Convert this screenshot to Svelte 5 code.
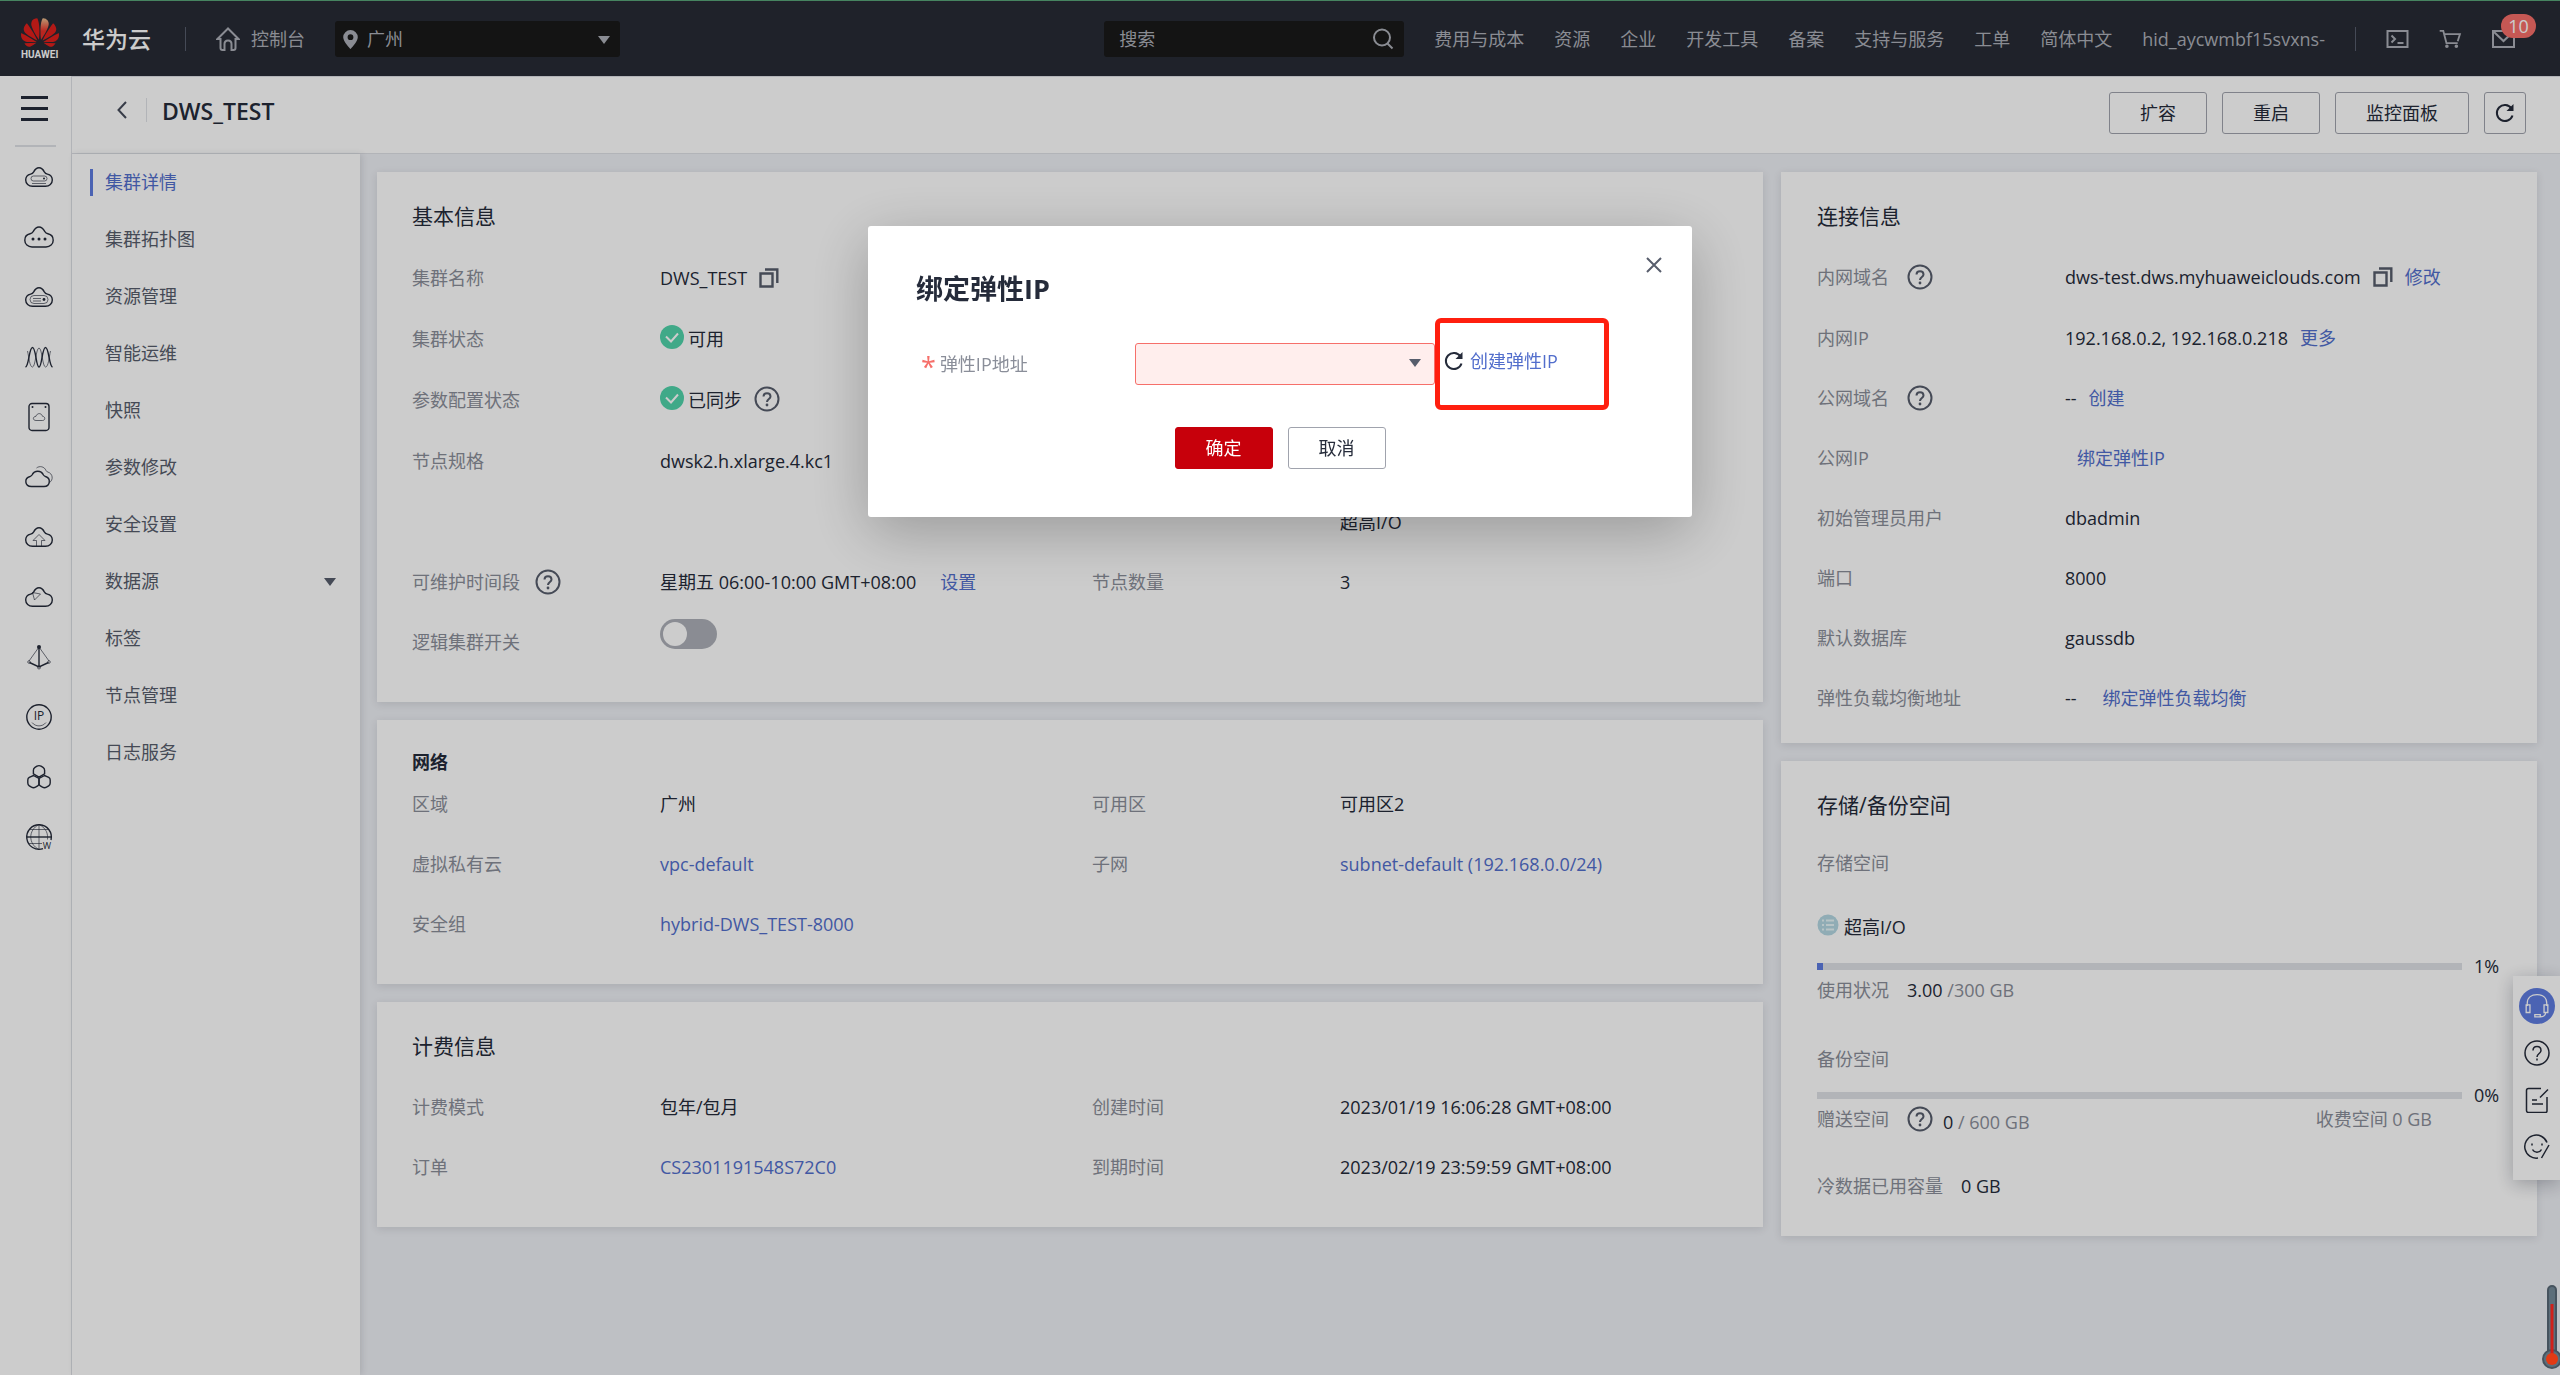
<script lang="ts">
	type RailItem = {
		label: string;
		paths: string[];
		thin?: string[];
		dots?: [number, number, number][];
		text?: { value: string; x: number; y: number; size: number };
	};

	const cloud =
		'M9.5 25.3C5.6 25.3 2.7 22.700 2.700 19.100c0-3 2-5.400 4.900-6 1.600-.3 2.300-.8 3.100-2.200C11.900 8.300 13.700 6.700 16 6.700s4.100 1.600 5.300 4.200c.8 1.400 1.500 1.900 3.100 2.200 2.900.6 4.900 3 4.900 6 0 3.600-2.900 6.200-6.800 6.200z';

	const rail: RailItem[] = [
		{ label: '弹性云服务器', paths: [cloud], thin: ['M10.500 15h11a2.500 2.500 0 0 1 0 5h-11a2.500 2.500 0 0 1 0-5z', 'M9 22.500h14'], dots: [[21, 17.5, 1]] },
		{
			label: '云耀云服务器',
			paths: ['M9 26C4.900 26 1.800 23.200 1.800 19.200c0-3.300 2.300-5.800 5.300-6.400 1.600-.3 2.400-1 3.200-2.400C11.600 7.900 13.500 6 16 6s4.400 1.900 5.700 4.400c.8 1.400 1.600 2.100 3.200 2.400 3 .6 5.300 3.100 5.300 6.400 0 4-3.100 6.800-7.200 6.800z'],
			dots: [[10, 18, 1.5], [16, 18, 1.5], [22, 18, 1.5]]
		},
		{ label: '裸金属服务器', paths: [cloud], thin: ['M11 14.500h10a4 4 0 0 1 0 8H11a4 4 0 0 1 0-8z', 'M10 17.500h8M10 20h8'], dots: [[21, 18.5, 1.4]] },
		{
			label: '弹性伸缩',
			paths: ['M2.500 26C6 25 6 6.500 9.500 6.500S13 26 16 26s3-19.500 6.500-19.500S26 25 29.500 26'],
			thin: ['M4.500 10C6 16 6.500 26 9.500 26S13 7 16 7s3.500 19 6.500 19S26 16 27.500 10']
		},
		{
			label: '云硬盘',
			paths: ['M9 2.500h14a3 3 0 0 1 3 3v21a3 3 0 0 1-3 3H9a3 3 0 0 1-3-3v-21a3 3 0 0 1 3-3z'],
			thin: ['M13 19.500c-3.500 0-3.500-4 0-4.200 1-3.600 5.500-3.600 6.500 0 3 .2 3 4.200 0 4.200z'],
			dots: [[9.5, 6, 1], [22.5, 6, 1]]
		},
		{
			label: '对象存储',
			paths: ['M8.500 25.500c-7 0-7.500-8.500-1.500-10 1-.3 1.500-.6 2-1.500 2.500-5 9-5 11.500 0 .5.900 1 1.200 2 1.500 5.500 1.500 5 10-1.500 10z'],
			thin: ['M13.500 7c3-2.500 8-1.500 9.500 2.500.4.900 1 1.300 2 1.600 5 1.500 5.500 8 1.500 10.400']
		},
		{ label: '云备份', paths: [cloud], thin: ['M13.500 25v-5.500H10l6-6 6 6h-3.500V25'] },
		{ label: '云专线', paths: [cloud], thin: ['M9.500 11.500l8 1.500-6 6z'] },
		{
			label: '虚拟私有云',
			paths: ['M16 6v20M6.500 21.500L16 26l9.500-4.500'],
			thin: ['M16 6L6 20M16 6l10 14', 'M7.300 21a1.300 1.300 0 1 1-2.600 0 1.300 1.300 0 0 1 2.600 0zM27.300 21a1.300 1.300 0 1 1-2.600 0 1.300 1.300 0 0 1 2.600 0zM17.500 26.500a1.500 1.500 0 1 1-3 0 1.500 1.500 0 0 1 3 0z'],
			dots: [[16, 6, 2]]
		},
		{
			label: '弹性公网IP',
			paths: ['M28.200 16a12.200 12.200 0 1 1-24.400 0 12.200 12.200 0 0 1 24.400 0z'],
			thin: ['M9 21.500c3.500 4.500 10.500 4.500 14 0'],
			text: { value: 'IP', x: 16, y: 19, size: 12 }
		},
		{
			label: '区块链',
			paths: [
				'M14 5.200q2-1.200 4 0l2 1.200q1.600 1 1.600 2.800v3.600L16 16.200l-5.600-3.400V9.200q0-1.800 1.600-2.800z',
				'M10.400 14.500L16 17.500v5q0 1.500-1.300 2.300l-2.200 1.400q-2 1.200-4 0l-2.200-1.400Q4.800 23.800 4.800 22v-3q0-1.700 1.500-2.600z',
				'M21.600 14.500L16 17.500v5q0 1.500 1.300 2.300l2.200 1.400q2 1.200 4 0l2.200-1.400q1.500-1 1.500-2.800v-3q0-1.700-1.500-2.600z'
			]
		},
		{
			label: '域名注册',
			paths: ['M20 27.700A12.300 12.300 0 1 1 28 19', 'M3.500 16h25'],
			thin: ['M16 3.500v25M16 3.500C5 9 5 23 16 28.500M16 3.500c8 4 9 10 8.500 15', 'M6 8.500h20M6 22.500h13'],
			text: { value: 'W', x: 24, y: 28, size: 9 }
		}
	];

	const topLinks = ['费用与成本', '资源', '企业', '开发工具', '备案', '支持与服务', '工单', '简体中文', 'hid_aycwmbf15svxns-'];

	const menu = ['集群详情', '集群拓扑图', '资源管理', '智能运维', '快照', '参数修改', '安全设置', '数据源', '标签', '节点管理', '日志服务'];

	let active = $state('集群详情');
	let keyword = $state('');
	let logicalCluster = $state(false);
	let dialogOpen = $state(true);
</script>

{#snippet helpIcon()}
	<svg class="help" viewBox="0 0 26 26" role="img" aria-label="帮助">
		<circle cx="13" cy="13" r="11.500" />
		<path d="M9.500 10.500c0-4.500 7-4.500 7 0 0 2.500-3.500 2.500-3.500 5.500" />
		<circle class="dot" cx="13" cy="19" r="1.400" />
	</svg>
{/snippet}

{#snippet copyIcon()}
	<svg class="copy" viewBox="0 0 20 20" role="img" aria-label="复制">
		<path d="M1.500 5.500h12v13h-12z" />
		<path d="M6 1.500h12.300V15" />
	</svg>
{/snippet}

{#snippet checkIcon()}
	<svg class="check" viewBox="0 0 24 24" aria-hidden="true">
		<circle cx="12" cy="12" r="12" />
		<path d="M6 11.500l5 5 7-8" />
	</svg>
{/snippet}

{#snippet refreshIcon()}
	<svg class="refresh" viewBox="0 0 20 20" aria-hidden="true">
		<path d="M17.500 12.500A8 8 0 1 1 16.500 5.500" />
		<path class="solid" d="M18.500 1v7h-7z" />
	</svg>
{/snippet}

{#snippet caret()}
	<svg class="caret" viewBox="0 0 12 8" aria-hidden="true"><path d="M0 0h12L6 8z" /></svg>
{/snippet}

<header class="topbar">
	<a class="logo" href="#home" aria-label="华为云首页">
		<svg viewBox="0 2.900 24 18.200" aria-hidden="true">
			<defs>
				<linearGradient id="petal" x1="0" y1="0" x2="0" y2="1">
					<stop offset="0" stop-color="#e8c090" />
					<stop offset="0.600" stop-color="#e83028" />
				</linearGradient>
			</defs>
			<path fill="#e0201c" d="M3.670 6.140S1.820 7.910 1.720 9.780v.35c.08 1.510 1.220 2.400 1.220 2.400 1.830 1.790 6.260 4.040 7.300 4.550 0 0 .06.03.1-.01l.02-.04v-.04C7.520 10.800 3.670 6.140 3.670 6.140zM9.650 18.600c-.02-.08-.1-.08-.1-.08l-7.380.26c.8 1.430 2.150 2.530 3.560 2.200.96-.25 3.160-1.780 3.880-2.300.06-.05.04-.09.04-.09zm.08-.78C6.490 15.630.21 12.280.21 12.280c-.15.46-.2.9-.21 1.300v.07c0 1.070.4 1.820.4 1.820.8 1.690 2.340 2.200 2.340 2.200.7.3 1.400.31 1.400.31.12.02 4.400 0 5.540 0 .05 0 .08-.05.08-.05v-.06c0-.03-.03-.05-.03-.05zM9.060 3.190a3.420 3.420 0 0 0-2.570 3.150v.41c.03.6.16 1.050.16 1.050.66 2.900 3.860 7.650 4.550 8.650.05.05.1.03.1.03a.1.1 0 0 0 .06-.1c1.060-10.600-1.110-13.420-1.110-13.420-.32.02-1.190.23-1.190.23z" />
			<path fill="url(#petal)" d="M17.360 5.460s-.49-1.800-2.440-2.280c0 0-.57-.14-1.170-.22 0 0-2.180 2.810-1.120 13.430.01.07.06.08.06.08.07.03.1-.03.1-.03.72-1.030 3.900-5.760 4.550-8.640 0 0 .36-1.400.02-2.340z" />
			<path fill="#e0201c" d="M14.440 18.530s-.07 0-.09.05c0 0-.01.07.03.1.7.51 2.850 2 3.880 2.300 0 0 .16.05.43.06h.14c.69-.02 1.900-.37 3-2.260zM22.270 10.120c.14-2.060-1.940-3.970-1.940-3.980 0 0-3.850 4.660-6.670 10.800 0 0-.03.08.02.13l.04.01h.06c1.060-.53 5.460-2.770 7.280-4.540 0 0 1.150-.93 1.210-2.420zM23.790 12.260s-6.280 3.370-9.520 5.550c0 0-.05.04-.03.11 0 0 .03.06.07.06 1.160 0 5.560 0 5.670-.02 0 0 .57-.02 1.270-.29 0 0 1.560-.5 2.370-2.270 0 0 .73-1.450.17-3.140z" />
		</svg>
		<span>HUAWEI</span>
	</a>
	<span class="brand">华为云</span>
	<span class="bar"></span>
	<a class="console" href="#console">
		<svg viewBox="0 0 24 24" aria-hidden="true">
			<path d="M12 1.500L1.500 12h3v9q0 2 2 2H8.500v-6q0-3.500 3.500-3.500t3.500 3.500v6h2q2 0 2-2v-9h3z" />
		</svg>
		控制台
	</a>
	<div class="region">
		<svg class="pin" viewBox="0 0 15 19" aria-hidden="true">
			<path d="M7.500 0A7.300 7.300 0 0 0 .2 7.300C.2 12 7.500 19 7.500 19s7.300-7 7.300-11.700A7.300 7.300 0 0 0 7.500 0zm0 4.300a2.900 2.900 0 1 1 0 5.800 2.900 2.900 0 0 1 0-5.800z" />
		</svg>
		<select aria-label="区域"><option>广州</option></select>
		{@render caret()}
	</div>

	<nav class="topnav" aria-label="顶部导航">
		<div class="search">
			<input type="text" placeholder="搜索" aria-label="搜索" bind:value={keyword} />
			<svg viewBox="0 0 22 22" aria-hidden="true"><circle cx="10" cy="9.500" r="8" /><path d="M15.500 15.500l5 5" /></svg>
		</div>
		{#each topLinks as link}
			<a href="#top">{link}</a>
		{/each}
		<span class="bar"></span>
		<a class="tool" href="#shell" aria-label="CloudShell">
			<svg viewBox="0 0 22 18"><path d="M1 1h20v16H1zM5 5.500l3.500 3.500L5 12.500M11 13h6" /></svg>
		</a>
		<a class="tool" href="#cart" aria-label="购物车">
			<svg viewBox="0 0 24 20"><path d="M0 1h4l3.500 13.500H20M5 4.500h17.500l-2.500 8" /><circle cx="8" cy="18" r="1" /><circle cx="18.500" cy="18" r="1" /></svg>
		</a>
		<a class="tool" href="#mail" aria-label="消息">
			<svg viewBox="0 0 23 18"><path d="M1 1h21v16H1zM2 2l9.500 9L21 2" /></svg>
			<span class="badge">10</span>
		</a>
	</nav>
</header>

<div class="page">
	<nav class="rail" aria-label="服务列表">
		<button class="burger" aria-label="展开菜单"><i></i><i></i><i></i></button>
		<hr />
		{#each rail as item}
			<a href="#service" aria-label={item.label}>
				<svg viewBox="0 0 32 32">
					{#each item.paths as d}<path {d} />{/each}
					{#each item.thin ?? [] as d}<path class="thin" {d} />{/each}
					{#each item.dots ?? [] as [cx, cy, r]}<circle {cx} {cy} {r} />{/each}
					{#if item.text}
						<text x={item.text.x} y={item.text.y} font-size={item.text.size}>{item.text.value}</text>
					{/if}
				</svg>
			</a>
		{/each}
	</nav>

	<div class="main">
		<div class="titlebar">
			<button class="back" aria-label="返回">
				<svg viewBox="0 0 10 18"><path d="M9 1L1.500 9 9 17" /></svg>
			</button>
			<h1>DWS_TEST</h1>
			<div class="actions">
				<button class="btn">扩容</button>
				<button class="btn">重启</button>
				<button class="btn">监控面板</button>
				<button class="btn square" aria-label="刷新">{@render refreshIcon()}</button>
			</div>
		</div>

		<div class="body">
			<ul class="menu">
				{#each menu as item}
					<li>
						<a class:active={item === active} href="#menu" onclick={() => (active = item)}>{item}</a>
						{#if item === '数据源'}{@render caret()}{/if}
					</li>
				{/each}
			</ul>

			<main>
				<div class="column">
					<section class="card">
						<h2>基本信息</h2>
						<dl class="four first">
							<dt>集群名称</dt>
							<dd>DWS_TEST {@render copyIcon()}</dd>
							<dt></dt>
							<dd></dd>
							<dt>集群状态</dt>
							<dd class="status">{@render checkIcon()}可用</dd>
							<dt></dt>
							<dd></dd>
							<dt>参数配置状态</dt>
							<dd class="status">{@render checkIcon()}已同步 {@render helpIcon()}</dd>
							<dt></dt>
							<dd></dd>
							<dt>节点规格</dt>
							<dd>dwsk2.h.xlarge.4.kc1</dd>
							<dt></dt>
							<dd class="disk">超高I/O</dd>
						</dl>
						<dl class="four">
							<dt>可维护时间段 {@render helpIcon()}</dt>
							<dd class="window">星期五 06:00-10:00 GMT+08:00 <a href="#window">设置</a></dd>
							<dt>节点数量</dt>
							<dd>3</dd>
							<dt><label for="logical">逻辑集群开关</label></dt>
							<dd class="toggle"><input id="logical" type="checkbox" role="switch" bind:checked={logicalCluster} /></dd>
						</dl>
					</section>

					<section class="card">
						<h3>网络</h3>
						<dl class="four">
							<dt>区域</dt>
							<dd>广州</dd>
							<dt>可用区</dt>
							<dd>可用区2</dd>
							<dt>虚拟私有云</dt>
							<dd><a href="#vpc">vpc-default</a></dd>
							<dt>子网</dt>
							<dd><a href="#subnet">subnet-default (192.168.0.0/24)</a></dd>
							<dt>安全组</dt>
							<dd><a href="#group">hybrid-DWS_TEST-8000</a></dd>
						</dl>
					</section>

					<section class="card">
						<h2>计费信息</h2>
						<dl class="four">
							<dt>计费模式</dt>
							<dd>包年/包月</dd>
							<dt>创建时间</dt>
							<dd>2023/01/19 16:06:28 GMT+08:00</dd>
							<dt>订单</dt>
							<dd><a href="#order">CS2301191548S72C0</a></dd>
							<dt>到期时间</dt>
							<dd>2023/02/19 23:59:59 GMT+08:00</dd>
						</dl>
					</section>
				</div>

				<div class="column">
					<section class="card connection">
						<h2>连接信息</h2>
						<dl class="two">
							<dt>内网域名 {@render helpIcon()}</dt>
							<dd>dws-test.dws.myhuaweiclouds.com {@render copyIcon()} <a href="#domain">修改</a></dd>
							<dt>内网IP</dt>
							<dd>192.168.0.2, 192.168.0.218 <a href="#more">更多</a></dd>
							<dt>公网域名 {@render helpIcon()}</dt>
							<dd>-- <a href="#create">创建</a></dd>
							<dt>公网IP</dt>
							<dd class="indent"><a href="#eip">绑定弹性IP</a></dd>
							<dt>初始管理员用户</dt>
							<dd>dbadmin</dd>
							<dt>端口</dt>
							<dd>8000</dd>
							<dt>默认数据库</dt>
							<dd>gaussdb</dd>
							<dt>弹性负载均衡地址</dt>
							<dd class="wide">-- <a href="#elb">绑定弹性负载均衡</a></dd>
						</dl>
					</section>

					<section class="card storage">
						<h2>存储/备份空间</h2>
						<p class="lead">存储空间</p>
						<p class="kind">
							<svg viewBox="0 0 22 22" aria-hidden="true">
								<circle cx="11" cy="11" r="10.500" />
								<path d="M5 6.500h2M9 6.500h8M5 11h2M9 11h8M5 15.500h2M9 15.500h8" />
							</svg>
							超高I/O
						</p>
						<div class="meter"><div class="track"><div style="width: 1%"></div></div><span>1%</span></div>
						<p class="usage">使用状况 <span><b>3.00</b> /300 GB</span></p>
						<p class="backup">备份空间</p>
						<div class="meter"><div class="track"><div style="width: 0%"></div></div><span>0%</span></div>
						<p class="usage">赠送空间 {@render helpIcon()}<span class="free"><b>0</b> / 600 GB</span><span class="charged">收费空间 0 GB</span></p>
						<p class="usage cold">冷数据已用容量 <b>0 GB</b></p>
					</section>
				</div>
			</main>
		</div>
	</div>
</div>

<aside class="floating" aria-label="帮助工具">
	<a class="service" href="#service" aria-label="在线客服">
		<svg viewBox="0 0 24 24"><path d="M3 12V9.500C3 4 7 1.500 12 1.500S21 4 21 9.500V12M2 11h3.500v7H2zM18.500 11H22v7h-3.500zM20 18c0 3-3 4-5 4h-5v-2h5v2" /></svg>
	</a>
	<a href="#help" aria-label="帮助">
		<svg viewBox="0 0 26 26"><circle cx="13" cy="13" r="12" /><path d="M9 10.500c0-5.500 8-5.500 8 0 0 3-4 3-4 6.500M13 18.500V20.500" /></svg>
	</a>
	<a href="#doc" aria-label="文档">
		<svg viewBox="0 0 26 26"><path d="M17 1.500H4.500q-2 0-2 2v20q0 2 2 2h17q1.500 0 1.500-1.500V10M24 2.500l-8 8M8 13h5M8 17h11" /></svg>
	</a>
	<a href="#feedback" aria-label="反馈">
		<svg viewBox="0 0 26 26"><path d="M23 8.500A11.500 11.500 0 1 0 14 24M25 11l-7.500 13M8.500 15.500c2 3.500 7 3.500 9 0M8 9.500v2M18 9.500v2" /></svg>
	</a>
</aside>

<svg class="thermo" viewBox="0 0 20 84" aria-hidden="true">
	<rect x="6" y="1" width="8" height="72" rx="4" />
	<circle cx="10" cy="74" r="9" />
	<path d="M10 19v50" />
	<circle class="bulb" cx="10" cy="74" r="6" />
</svg>

<div class="mask"></div>

{#if dialogOpen}
	<div class="dialog" role="dialog" aria-modal="true" aria-labelledby="dialog-title">
		<button class="close" aria-label="关闭" onclick={() => (dialogOpen = false)}>
			<svg viewBox="0 0 16 16"><path d="M1 1l14 14M15 1L1 15" /></svg>
		</button>
		<h2 id="dialog-title">绑定弹性IP</h2>
		<div class="field">
			<label for="eip"><span>*</span>弹性IP地址</label>
			<div class="picker">
				<select id="eip"><option></option></select>
				{@render caret()}
			</div>
			<div class="create">
				{@render refreshIcon()}
				<a href="#new-eip">创建弹性IP</a>
			</div>
		</div>
		<div class="buttons">
			<button class="btn primary">确定</button>
			<button class="btn" onclick={() => (dialogOpen = false)}>取消</button>
		</div>
	</div>
{/if}

<style>
	:global(body) {
		background: #eef0f5;
		color: #252b3a;
		font-family: 'Open Sans', 'Noto Sans CJK SC', sans-serif;
		font-size: 18px;
		line-height: 24px;
	}

	:global(#app) {
		display: flex;
		flex-direction: column;
		min-height: 100vh;
	}

	a {
		color: #526ecc;
		text-decoration: none;
	}

	button,
	select,
	input {
		box-sizing: border-box;
		font: inherit;
	}

	h1,
	h2,
	h3,
	p,
	dl,
	dd,
	ul {
		margin: 0;
		padding: 0;
	}

	svg {
		display: block;
		fill: none;
		flex: none;
	}

	/* shared icons */
	.help {
		height: 26px;
		stroke: #575d6c;
		stroke-width: 2;
		width: 26px;
	}

	.help .dot {
		fill: #575d6c;
		stroke: none;
	}

	.copy {
		height: 20px;
		stroke: #575d6c;
		stroke-width: 2.4;
		width: 20px;
	}

	.check {
		height: 24px;
		stroke: #fff;
		stroke-width: 2;
		width: 24px;
	}

	.check circle {
		fill: #50d4ab;
		stroke: none;
	}

	.refresh {
		height: 20px;
		stroke: #252b3a;
		stroke-width: 2;
		width: 20px;
	}

	.refresh .solid {
		fill: #252b3a;
		stroke: none;
	}

	.caret {
		fill: #575d6c;
		height: 8px;
		width: 12px;
	}

	/* top bar */
	.topbar {
		align-items: center;
		background: #272b35;
		border-top: 1px solid #58a578;
		display: flex;
		height: 75px;
		padding: 0 45px 0 21px;
	}

	.topbar a {
		color: #adb0b8;
	}

	.logo {
		width: 38px;
	}

	.logo svg {
		height: 29px;
		width: 38px;
	}

	.topbar .logo span {
		color: #fff;
		display: block;
		font-family: Roboto, sans-serif;
		font-size: 10px;
		font-weight: 700;
		line-height: 10px;
		margin-top: 3px;
	}

	.brand {
		color: #fff;
		font-size: 23px;
		font-weight: 500;
		line-height: 32px;
		margin: 0 34px 0 23px;
	}

	.bar {
		background: #575d6c;
		height: 24px;
		width: 1px;
	}

	.console {
		align-items: center;
		display: flex;
		gap: 11px;
		margin: 0 30px;
	}

	.console svg {
		height: 24px;
		stroke: #adb0b8;
		stroke-width: 2;
		width: 24px;
	}

	.region {
		position: relative;
	}

	.region select {
		appearance: none;
		background: #191919;
		border: 0;
		border-radius: 3px;
		color: #adb0b8;
		height: 36px;
		padding: 0 32px;
		width: 285px;
	}

	.pin {
		fill: #adb0b8;
		height: 19px;
		left: 8px;
		position: absolute;
		top: 9px;
		width: 15px;
	}

	.region .caret {
		fill: #adb0b8;
		position: absolute;
		right: 10px;
		top: 15px;
	}

	.topnav {
		align-items: center;
		display: flex;
		gap: 30px;
		margin-left: auto;
	}

	.search {
		position: relative;
	}

	.search input {
		background: #191919;
		border: 0;
		border-radius: 3px;
		color: #adb0b8;
		display: block;
		height: 36px;
		padding: 0 48px 0 15px;
		width: 300px;
	}

	.search input::placeholder {
		color: #adb0b8;
	}

	.search svg {
		height: 22px;
		position: absolute;
		right: 10px;
		stroke: #adb0b8;
		stroke-width: 2;
		top: 7px;
		width: 22px;
	}

	.tool {
		position: relative;
	}

	.tool svg {
		height: 18px;
		stroke: #adb0b8;
		stroke-width: 2;
		width: 23px;
	}

	.badge {
		background: #f76e69;
		border-radius: 12px;
		bottom: 10px;
		color: #fff;
		left: 9px;
		line-height: 24px;
		position: absolute;
		text-align: center;
		width: 35px;
	}

	/* page frame */
	.page {
		display: flex;
		flex: 1;
	}

	.rail {
		align-items: center;
		background: #fff;
		border-right: 1px solid #dfe1e6;
		display: flex;
		flex: none;
		flex-direction: column;
		width: 71px;
	}

	.burger {
		background: none;
		border: 0;
		display: flex;
		flex-direction: column;
		gap: 8px;
		margin: 20px 2px 24px 0;
		padding: 0;
		width: 27px;
	}

	.burger i {
		background: #252b3a;
		height: 3px;
	}

	.rail hr {
		background: #dfe1e6;
		border: 0;
		height: 2px;
		margin: 0;
		width: 41px;
	}

	.rail a {
		align-items: center;
		display: flex;
		height: 60px;
		padding-left: 7px;
	}

	.rail svg {
		height: 32px;
		stroke: #252b3a;
		stroke-width: 1.4;
		width: 32px;
	}

	.rail .thin {
		stroke-opacity: 0.8;
		stroke-width: 0.8;
	}

	.rail circle,
	.rail text {
		fill: #252b3a;
		stroke: none;
	}

	.rail text {
		text-anchor: middle;
	}

	.main {
		display: flex;
		flex: 1;
		flex-direction: column;
		min-width: 0;
	}

	.titlebar {
		align-items: flex-start;
		background: #fff;
		border: solid #dfe1e6;
		border-width: 1px 0;
		display: flex;
		height: 61px;
		padding: 15px 34px 0 45px;
	}

	.back {
		background: none;
		border: 0;
		border-right: 1px solid #dfe1e6;
		height: 24px;
		margin: 6px 15px 0 0;
		padding: 0 19px 0 0;
	}

	.back svg {
		height: 18px;
		stroke: #464c5b;
		stroke-width: 2;
		width: 10px;
	}

	h1 {
		font-size: 23px;
		font-weight: 600;
		line-height: 38px;
	}

	.actions {
		display: flex;
		gap: 15px;
		margin-left: auto;
	}

	.btn {
		background: none;
		border: 1px solid #a0a3ad;
		border-radius: 3px;
		color: #252b3a;
		height: 42px;
		padding: 0 30px;
	}

	.btn.square {
		padding: 0 10px;
	}

	.body {
		display: flex;
		flex: 1;
	}

	.menu {
		background: #fff;
		box-shadow: 2px 0 6px rgba(37, 43, 58, 0.12);
		flex: none;
		list-style: none;
		width: 288px;
	}

	.menu li {
		align-items: center;
		display: flex;
		height: 57px;
		justify-content: space-between;
		padding: 0 24px 0 18px;
	}

	.menu a {
		border-left: 3px solid transparent;
		color: #575d6c;
		line-height: 27px;
		padding-left: 12px;
	}

	.menu .active {
		border-color: #5e7ce0;
		color: #526ecc;
	}

	main {
		align-items: start;
		display: grid;
		flex: 1;
		gap: 18px;
		grid-template-columns: 11fr 6fr;
		min-width: 0;
		padding: 18px 23px 18px 17px;
	}

	.column {
		display: grid;
		gap: 18px;
		min-width: 0;
	}

	/* cards */
	.card {
		background: #fff;
		box-shadow: 0 2px 8px rgba(37, 43, 58, 0.12);
		padding: 30px 35px;
	}

	.card h2 {
		font-size: 21px;
		font-weight: 400;
		line-height: 28px;
		margin-bottom: 17px;
	}

	.card h3 {
		font-size: 18px;
		font-weight: 700;
		line-height: 24px;
	}

	dl {
		display: grid;
		grid-auto-rows: 60px;
	}

	.four {
		grid-template-columns: 248px 432px 248px 1fr;
	}

	.first {
		grid-template-rows: 61px 61px 61px 122px;
	}

	.first dt,
	.first dd {
		height: 61px;
	}

	.first .disk {
		align-self: end;
	}

	.two {
		grid-template-columns: 248px 1fr;
		grid-template-rows: 61px 61px;
	}

	.card.connection {
		padding: 30px 36px 15px;
	}

	.connection h2 {
		margin-bottom: 16px;
	}

	dt,
	dd {
		align-items: center;
		display: flex;
		white-space: nowrap;
	}

	dt {
		color: #8a8e99;
		gap: 15px;
	}

	.connection dt {
		gap: 18px;
	}

	dd {
		gap: 12px;
	}

	dd.status {
		gap: 4px;
	}

	.status .check,
	.kind svg {
		margin-bottom: 4px;
	}

	.status .help {
		margin: 0 0 2px 8px;
	}

	dd.window {
		gap: 24px;
	}

	dd.wide {
		gap: 26px;
	}

	dd.indent {
		padding-left: 12px;
	}

	dd.toggle {
		align-items: flex-start;
		padding-top: 7px;
	}

	.toggle input {
		appearance: none;
		background: #adb0b8;
		border-radius: 15px;
		height: 30px;
		margin: 0;
		padding: 3px;
		width: 57px;
	}

	.toggle input::before {
		background: #fff;
		border-radius: 50%;
		content: '';
		display: block;
		height: 24px;
		width: 24px;
	}

	.toggle input:checked {
		background: #5e7ce0;
		padding-left: 30px;
	}

	/* storage card */
	.card.storage {
		color: #8a8e99;
		padding: 30px 35px 38px 36px;
	}

	.storage h2,
	.storage b,
	.storage .kind,
	.meter span {
		color: #252b3a;
		font-weight: 400;
	}

	.storage .lead {
		margin-top: 32px;
	}

	.kind {
		align-items: center;
		display: flex;
		gap: 5px;
		height: 24px;
		margin: 40px 0 15px;
	}

	.kind svg {
		height: 22px;
		stroke: #e6f5f8;
		stroke-width: 2;
		width: 22px;
	}

	.kind circle {
		fill: #b4d8e3;
		stroke: none;
	}

	.meter {
		align-items: center;
		display: flex;
		gap: 12px;
	}

	.meter span {
		width: 28px;
	}

	.track {
		background: #dfe1e6;
		flex: 1;
		height: 7px;
	}

	.track div {
		background: #5e7ce0;
		height: 7px;
	}

	.usage {
		align-items: center;
		display: flex;
		gap: 18px;
		height: 24px;
	}

	.backup {
		margin: 45px 0 12px;
	}

	.usage .free {
		margin-left: -8px;
		padding-top: 5px;
	}

	.usage .charged {
		margin: 0 70px 0 auto;
	}

	.usage.cold {
		margin-top: 43px;
	}

	/* floating tools */
	.floating {
		align-items: center;
		background: #fff;
		box-shadow: 0 4px 18px rgba(37, 43, 58, 0.3);
		box-sizing: border-box;
		display: flex;
		flex-direction: column;
		gap: 21px;
		height: 204px;
		padding-top: 12px;
		position: fixed;
		right: 0;
		top: 976px;
		width: 47px;
	}

	.floating svg {
		height: 26px;
		stroke: #252b3a;
		stroke-width: 1.5;
		width: 26px;
	}

	.floating .service {
		background: #5e7ce0;
		border-radius: 50%;
		margin-bottom: -5px;
		padding: 5px;
	}

	.floating .service svg {
		stroke: #fff;
		stroke-width: 1.2;
	}

	.thermo {
		bottom: 6px;
		fill: #5c6e7a;
		height: 84px;
		position: fixed;
		right: -2px;
		stroke: #46535e;
		stroke-width: 2;
		width: 20px;
		z-index: 2;
	}

	.thermo path {
		stroke: #d0201a;
		stroke-width: 3;
	}

	.thermo .bulb {
		fill: #e23a14;
		stroke: none;
	}

	.mask {
		background: rgba(0, 0, 0, 0.2);
		inset: 0;
		position: fixed;
	}

	/* dialog */
	.dialog {
		background: #fff;
		border-radius: 3px;
		box-shadow: 0 15px 60px rgba(0, 0, 0, 0.25);
		box-sizing: border-box;
		left: 50%;
		padding: 45px 48px 48px;
		position: fixed;
		top: 226px;
		transform: translateX(-50%);
		width: 824px;
	}

	.dialog h2 {
		font-size: 27px;
		font-weight: 700;
		line-height: 36px;
		margin-bottom: 36px;
	}

	.close {
		background: none;
		border: 0;
		padding: 0;
		position: absolute;
		right: 30px;
		top: 31px;
	}

	.close svg {
		height: 16px;
		stroke: #575d6c;
		stroke-width: 2;
		width: 16px;
	}

	.field {
		align-items: center;
		display: flex;
		height: 42px;
	}

	.field label {
		align-items: center;
		box-sizing: border-box;
		color: #8a8e99;
		display: flex;
		gap: 4px;
		padding-left: 5px;
		width: 219px;
	}

	.field label span {
		color: #f66f6a;
		font-size: 27px;
		line-height: 24px;
		padding-top: 6px;
	}

	.picker {
		position: relative;
	}

	.picker select {
		appearance: none;
		background: #ffeeed;
		border: 1px solid #f66f6a;
		border-radius: 3px;
		display: block;
		height: 42px;
		width: 300px;
	}

	.picker .caret {
		position: absolute;
		right: 14px;
		top: 16px;
	}

	.create {
		align-items: center;
		border: 5px solid #ff1f0f;
		border-radius: 6px;
		box-sizing: border-box;
		display: flex;
		flex: none;
		gap: 6px;
		height: 92px;
		padding: 0 0 6px 4px;
		width: 174px;
	}

	.buttons {
		display: flex;
		gap: 15px;
		justify-content: center;
		margin-top: 42px;
	}

	.btn.primary {
		background: #c7000b;
		border-color: #c7000b;
		color: #fff;
	}
</style>
